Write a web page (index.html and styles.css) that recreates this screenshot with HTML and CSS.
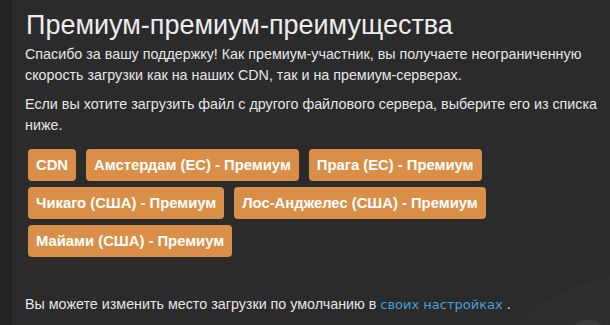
FILE: index.html
```html
<!DOCTYPE html>
<html>
<head>
  <title>Премиум</title>
  <link rel="stylesheet" href="styles.css">
</head>
<body>
  <div class="side"></div>
  <div class="main">
    <h2 class="title">Премиум-премиум-преимущества</h2>
    <p class="text">Спасибо за вашу поддержку! Как премиум-участник, вы получаете неограниченную скорость загрузки как на наших CDN, так и на премиум-серверах.</p>
    <p class="text">Если вы хотите загрузить файл с другого файлового сервера, выберите его из списка ниже.</p>
    <div class="servers">
      <button class="server">CDN</button>
      <button class="server">Амстердам (ЕС) - Премиум</button>
      <button class="server">Прага (ЕС) - Премиум</button>
      <button class="server">Чикаго (США) - Премиум</button>
      <button class="server">Лос-Анджелес (США) - Премиум</button>
      <button class="server">Майами (США) - Премиум</button>
    </div>
    <p class="text footer">Вы можете изменить место загрузки по умолчанию в <a href="#" class="link">своих настройках</a> .</p>
    <svg class="wave" viewBox="0 0 130 75" xmlns="http://www.w3.org/2000/svg">
      <path d="M40 75 C50 60 56 55 70 50 C85 42 95 34 110 32 C118 30 125 28 130 28 L130 75 Z" fill="#2e2e2e"></path>
      <path d="M95 75 C100 70 110 68 118 72 L122 75 Z" fill="#3a3a3a"></path>
    </svg>
  </div>
</body>
</html>
```

FILE: styles.css
```css
body {
  margin: 0;
  padding: 0;
  background-color: #242424;
  font-family: "Liberation Sans", Arial, sans-serif;
  color: #e6e6e6;
  display: flex;
  height: 325px;
  overflow: hidden;
}

.side {
  width: 12px;
  flex-shrink: 0;
  background-color: #242424;
}

.main {
  position: relative;
  flex: 1;
  background-color: #2b2b2b;
  padding: 10px 12px 0 13px;
  overflow: hidden;
}

.title {
  margin: 0 0 4px 1px;
  font-family: "Liberation Sans", Arial, sans-serif;
  font-weight: 400;
  font-size: 27px;
  line-height: 30px;
  color: #ececec;
}

.text {
  margin: 0 0 8px 0;
  font-size: 14.3px;
  line-height: 21px;
  position: relative;
  z-index: 1;
}

.servers {
  display: flex;
  flex-wrap: wrap;
  gap: 6px 10px;
  padding: 5px 0 0 3px;
  width: 480px;
}

.server {
  background-color: #d98f47;
  color: #ffffff;
  border: none;
  border-radius: 4px;
  height: 32px;
  padding: 0 8px;
  font-family: "Liberation Sans", Arial, sans-serif;
  font-weight: 700;
  font-size: 14.8px;
  cursor: pointer;
}

.footer {
  margin-top: 37px;
}

.link {
  color: #4a9fd8;
  text-decoration: none;
  font-family: "DejaVu Sans", sans-serif;
  font-size: 13px;
}

.wave {
  position: absolute;
  right: 0;
  bottom: 0;
  width: 130px;
  height: 75px;
}
```
